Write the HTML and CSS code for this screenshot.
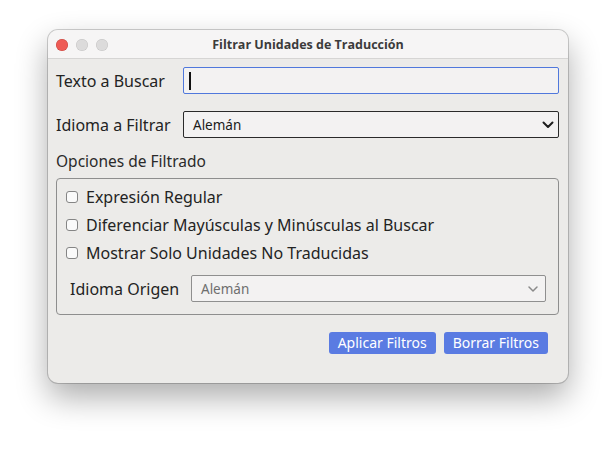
FILE: index.html
```html
<!DOCTYPE html>
<html lang="es">
<head>
<meta charset="utf-8">
<title>Filtrar Unidades de Traducción</title>
<link rel="stylesheet" href="styles.css">
</head>
<body>
<div class="window">
  <div class="titlebar">
    <div class="lights">
      <span class="light close"></span>
      <span class="light"></span>
      <span class="light"></span>
    </div>
    <div class="title">Filtrar Unidades de Traducción</div>
  </div>
  <div class="content">
    <div class="row">
      <div class="label">Texto a Buscar</div>
      <div class="input"><span class="caret"></span></div>
    </div>
    <div class="row row2">
      <div class="label">Idioma a Filtrar</div>
      <div class="select">
        <span>Alemán</span>
        <svg width="12" height="8" viewBox="0 0 12 8"><path d="M1.5 1.5 L6 6 L10.5 1.5" fill="none" stroke="#1e1e1e" stroke-width="2" stroke-linecap="round" stroke-linejoin="round"/></svg>
      </div>
    </div>
    <div class="heading">Opciones de Filtrado</div>
    <div class="group">
      <div class="check"><span class="box"></span><span>Expresión Regular</span></div>
      <div class="check"><span class="box"></span><span>Diferenciar Mayúsculas y Minúsculas al Buscar</span></div>
      <div class="check"><span class="box"></span><span>Mostrar Solo Unidades No Traducidas</span></div>
      <div class="row origin">
        <div class="label">Idioma Origen</div>
        <div class="select disabled">
          <span>Alemán</span>
          <svg width="12" height="8" viewBox="0 0 12 8"><path d="M2 2 L6 6 L10 2" fill="none" stroke="#8a8a8a" stroke-width="1.5" stroke-linecap="round" stroke-linejoin="round"/></svg>
        </div>
      </div>
    </div>
    <div class="buttons">
      <div class="btn">Aplicar Filtros</div>
      <div class="btn">Borrar Filtros</div>
    </div>
  </div>
</div>
</body>
</html>
```

FILE: styles.css
```css
html, body {
  margin: 0;
  padding: 0;
  background: #ffffff;
}
html {
  height: 100%;
}
body {
  min-height: 100%;
  box-sizing: border-box;
  padding: 30px 0 0 48px;
  font-family: "Noto Sans", "Open Sans", sans-serif;
  color: #222222;
}
.window {
  width: 520px;
  height: 353px;
  border-radius: 10px;
  background: #ecebe9;
  box-shadow: 0 0 0 1px rgba(0,0,0,0.18), 0 14px 32px rgba(0,0,0,0.33);
  overflow: hidden;
  box-sizing: border-box;
}
.titlebar {
  position: relative;
  height: 28px;
  background: #f6f5f5;
  border-bottom: 1px solid #d6d5d4;
  display: flex;
  align-items: center;
  justify-content: center;
}
.lights {
  position: absolute;
  left: 8px;
  top: 9px;
  display: flex;
  gap: 8px;
}
.light {
  width: 12px;
  height: 12px;
  border-radius: 50%;
  background: #dcdbdb;
  box-shadow: inset 0 0 0 0.5px rgba(0,0,0,0.12);
}
.light.close {
  background: #ee5b55;
  box-shadow: inset 0 0 0 0.5px rgba(160,40,30,0.5);
}
.title {
  font-family: "Open Sans", "Noto Sans", sans-serif;
  font-weight: 700;
  font-size: 12.5px;
  color: #3b3b3b;
  padding-top: 1px;
}
.content {
  padding: 8px 9px 0 8px;
}
.row {
  display: flex;
  align-items: center;
  height: 27px;
}
.row2 {
  margin-top: 17px;
}
.label {
  width: 127px;
  flex: none;
  font-size: 16px;
  color: #232323;
}
.input {
  flex: 1;
  height: 27px;
  box-sizing: border-box;
  border: 1px solid #5078dc;
  border-radius: 2px;
  background: #f3f2f2;
  display: flex;
  align-items: center;
  padding-left: 5px;
}
.caret {
  width: 2px;
  height: 18px;
  background: #111111;
}
.select {
  flex: 1;
  height: 27px;
  box-sizing: border-box;
  border: 1px solid #2a2a2a;
  border-radius: 2px;
  background: #f3f2f2;
  display: flex;
  align-items: center;
  justify-content: space-between;
  padding: 0 4px 0 9px;
  font-size: 13.5px;
  color: #1a1a1a;
}
.select.disabled {
  border-color: #8f8f8f;
  color: #6e6e6e;
  padding-right: 6px;
}
.heading {
  margin-top: 13px;
  height: 20px;
  line-height: 20px;
  font-size: 15.5px;
  color: #2a2a2a;
}
.group {
  margin-top: 7px;
  border: 1px solid #8e8e8e;
  border-radius: 4px;
  padding: 4px 12px 12px 9px;
}
.check {
  display: flex;
  align-items: center;
  gap: 8px;
  height: 28px;
  font-size: 16px;
  color: #232323;
}
.box {
  width: 12px;
  height: 12px;
  box-sizing: border-box;
  border: 1px solid #858585;
  border-radius: 3px;
  background: #fafafa;
  flex: none;
}
.origin {
  margin-top: 8px;
  padding-left: 4px;
}
.origin .label {
  width: 121px;
}
.buttons {
  margin-top: 17px;
  display: flex;
  justify-content: flex-end;
  gap: 8px;
  padding-right: 11px;
}
.btn {
  height: 22px;
  line-height: 22px;
  padding: 0 9px;
  border-radius: 3px;
  background: #5a7be2;
  color: #ffffff;
  font-size: 14px;
}
```
